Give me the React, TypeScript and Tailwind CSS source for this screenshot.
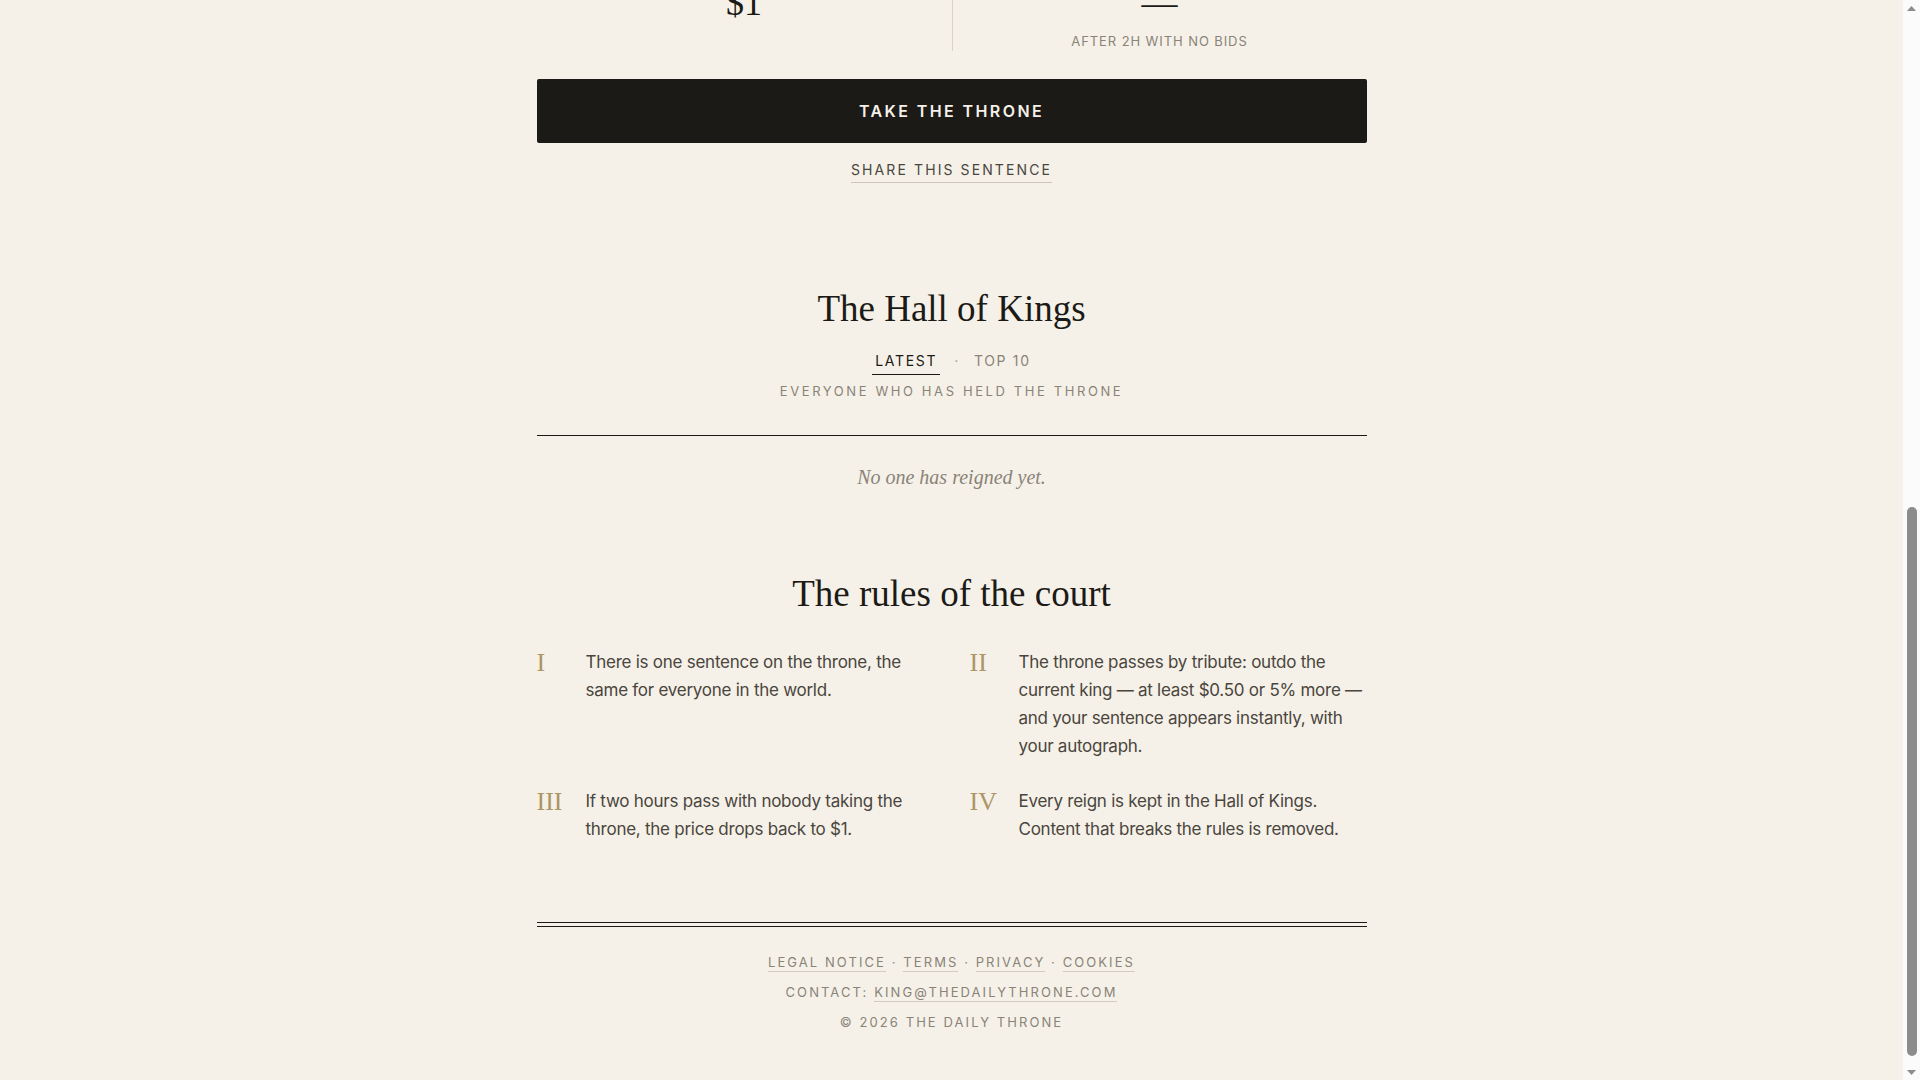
import { useLayoutEffect, useRef } from "react";

const serif = "font-['Liberation_Serif',serif]";
const sans = "font-['Inter',sans-serif]";

const rules = [
  { num: "I", text: "There is one sentence on the throne, the same for everyone in the world." },
  {
    num: "II",
    text: "The throne passes by tribute: outdo the current king — at least $0.50 or 5% more — and your sentence appears instantly, with your autograph.",
  },
  { num: "III", text: "If two hours pass with nobody taking the throne, the price drops back to $1." },
  { num: "IV", text: "Every reign is kept in the Hall of Kings. Content that breaks the rules is removed." },
];

const footerLinks = ["LEGAL NOTICE", "TERMS", "PRIVACY", "COOKIES"];

const Arrow = ({ down }: { down?: boolean }) => (
  <div className="flex h-[16px] items-center justify-center">
    <svg width="9" height="5" viewBox="0 0 9 5">
      <path d={down ? "M0 0 H9 L4.5 5 Z" : "M0 5 H9 L4.5 0 Z"} fill="#8c8c8c" />
    </svg>
  </div>
);

const App = () => {
  const scroller = useRef<HTMLDivElement>(null);

  // the page is shown scrolled to its foot
  useLayoutEffect(() => {
    const el = scroller.current;
    if (el) el.scrollTop = el.scrollHeight;
  }, []);

  return (
    <div className={`flex h-screen bg-[#f5f1e8] text-[#1c1a16] ${sans}`}>
      <div ref={scroller} className="min-w-0 flex-1 overflow-y-scroll">
        <div className="mx-auto w-full max-w-[830px] pb-[48px]">
          {/* masthead */}
          <header className="pt-[64px] text-center">
            <p className="text-[13px] tracking-[0.22em] text-[#8a8378]">EST. 2026 · ONE SENTENCE · ONE KING</p>
            <h1 className={`${serif} mt-4 text-[64px] leading-none`}>The Daily Throne</h1>
            <div className="mt-8 h-[5px] border-y border-[#1c1a16]" />
          </header>

          <section className="flex h-[640px] flex-col items-center justify-center text-center">
            <p className="text-[13px] tracking-[0.22em] text-[#8a8378]">TODAY'S SENTENCE</p>
            <p className={`${serif} mt-8 text-[44px] italic leading-tight text-[#8a8378]`}>
              The throne awaits its first king.
            </p>
            <p className="mt-8 text-[13px] tracking-[0.22em] text-[#8a8378]">— UNCLAIMED —</p>
          </section>

          {/* price row */}
          <div className="grid grid-cols-2 border-t border-[#d9d2c5]">
            <div className="flex flex-col items-center pt-6">
              <p className="text-[13px] leading-[18px] tracking-[0.15em] text-[#8a8378]">CURRENT TRIBUTE</p>
              <p className={`${serif} mt-2 text-[36px] leading-[40px]`}>$1</p>
            </div>
            <div className="flex flex-col items-center border-l border-[#d9d2c5] pt-6 pb-px">
              <p className="text-[13px] leading-[18px] tracking-[0.15em] text-[#8a8378]">RETURNS TO $1</p>
              <p className={`${serif} mt-2 text-[36px] leading-[40px]`}>—</p>
              <p className="mt-[9px] text-[13px] leading-[18px] tracking-[0.07em] text-[#8a8378]">AFTER 2H WITH NO BIDS</p>
            </div>
          </div>

          <button className="mt-[28px] flex h-[64px] w-full items-center justify-center rounded-[2px] bg-[#1c1a16] text-[16px] font-semibold tracking-[0.15em] text-[#f5f1e8]">
            TAKE THE THRONE
          </button>

          <div className="mt-[17px] flex justify-center">
            <a className="border-b border-[#cdc5b7] pb-[2px] text-[14px] leading-[20px] tracking-[0.15em] text-[#4a453d]">
              SHARE THIS SENTENCE
            </a>
          </div>

          {/* hall of kings */}
          <section className="mt-[104px] text-center">
            <h2 className={`${serif} text-[37px] leading-[44px]`}>The Hall of Kings</h2>
            <div className="mt-[20px] flex items-center justify-center gap-[14px] text-[14px] leading-[20px] tracking-[0.12em]">
              <span className="border-b border-[#1c1a16] px-[3px] pb-[3px] text-[#1c1a16]">LATEST</span>
              <span className="pb-[4px] text-[#a59d90]">·</span>
              <span className="pb-[4px] text-[#8a8378]">TOP 10</span>
            </div>
            <p className="mt-[7px] text-[13px] leading-[18px] tracking-[0.2em] text-[#8a8378]">
              EVERYONE WHO HAS HELD THE THRONE
            </p>
            <div className="mt-[35px] h-px bg-[#1c1a16]" />
            <p className={`${serif} mt-[27px] text-[20px] italic leading-[28px] text-[#8a8378]`}>No one has reigned yet.</p>
          </section>

          {/* rules */}
          <section className="mt-[81px]">
            <h2 className={`${serif} text-center text-[37px] leading-[44px]`}>The rules of the court</h2>
            <div className="mt-[32px] grid grid-cols-2 gap-x-[36px] gap-y-[27px]">
              {rules.map((rule) => (
                <div key={rule.num} className="grid grid-cols-[49px_1fr]">
                  <span className={`${serif} pt-px text-[26px] leading-[28px] text-[#ad9566]`}>{rule.num}</span>
                  <p className="text-[17px] leading-[28px] tracking-[-0.015em] text-[#4a453d]">{rule.text}</p>
                </div>
              ))}
            </div>
          </section>

          {/* footer */}
          <footer className="mt-[79px]">
            <div className="h-[5px] border-y border-[#1c1a16]" />
            <div className="mt-[25px] flex flex-col items-center gap-[10px] text-[13px] leading-[20px] tracking-[0.16em] text-[#8a8378]">
              <p>
                {footerLinks.map((link, i) => (
                  <span key={link}>
                    {i > 0 && <span> · </span>}
                    <a className="border-b border-[#d3cbbd] pb-[1px]">{link}</a>
                  </span>
                ))}
              </p>
              <p>
                CONTACT: <a className="border-b border-[#d3cbbd] pb-[1px]">KING@THEDAILYTHRONE.COM</a>
              </p>
              <p>© 2026 THE DAILY THRONE</p>
            </div>
          </footer>
        </div>
      </div>

      {/* scrollbar */}
      <div className="flex w-[17px] flex-col bg-[#fbfbfb]">
        <Arrow />
        <div className="flex flex-1 flex-col justify-end pb-[8px]">
          <div className="mx-auto h-[549px] w-[10px] rounded-full bg-[#8c8c8c]" />
        </div>
        <Arrow down />
      </div>
    </div>
  );
};

export default App;
